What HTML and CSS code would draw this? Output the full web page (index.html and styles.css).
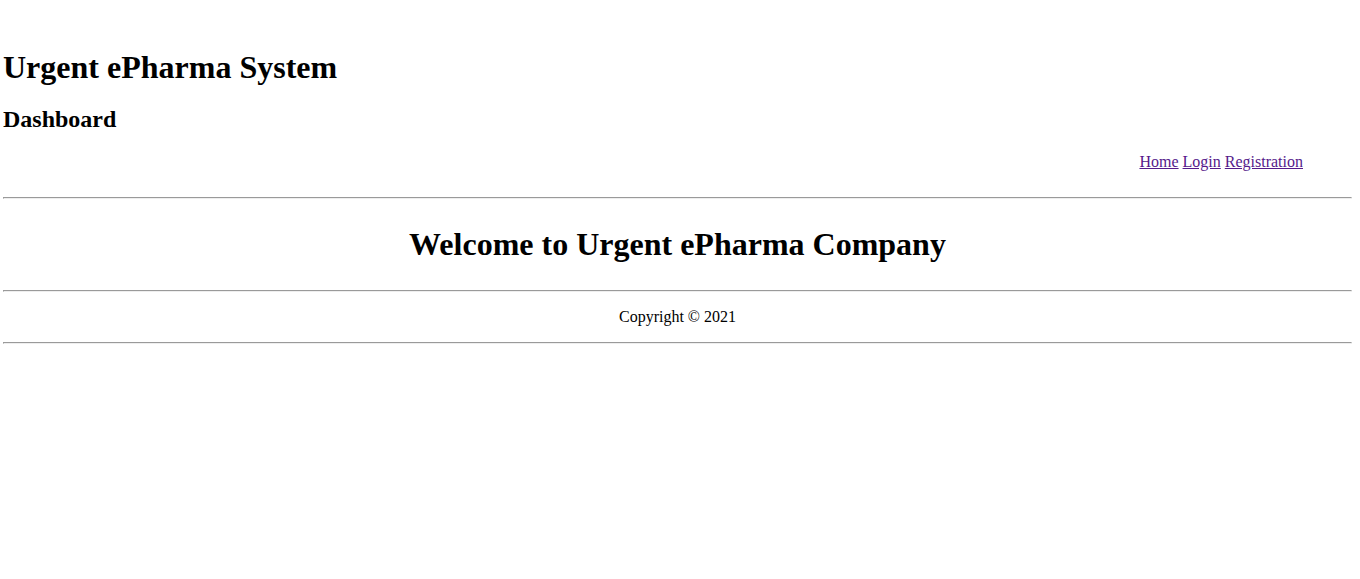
FILE: index.html
```html
<!DOCTYPE html>
<html lang="en">
<head>
    <meta charset="UTF-8">
    <meta name="viewport" content="width=device-width, initial-scale=1.0">
    <title>Urgent ePharma System</title>
    <link rel="stylesheet" href="styles.css">
</head>
<body>
    <div class="header">
        <h1>Urgent ePharma System</h1>
        <h2>Dashboard</h2>
        <div class="nav">
            <a href="#">Home</a>
            <a href="#">Login</a>
            <a href="#">Registration</a>
        </div>
    </div>
    <hr>
    <div class="content">
        <h1>Welcome to Urgent ePharma Company</h1>
    </div>
    <hr>
    <div class="footer">
        <p>Copyright &copy; 2021</p>
    </div>
    <hr>
</body>
</html>
```

FILE: styles.css
```css
body {
    font-family: "Liberation Serif", "Times New Roman", serif;
    margin: 0 8px 0 3px;
    padding-top: 28px;
}

.header h1 {
    margin: 21px 0 20px;
}

.nav {
    text-align: right;
    padding-right: 49px;
    margin-bottom: 26px;
}

.nav a {
    color: #551a8b;
}

hr {
    margin: 8px 0;
}

.content {
    text-align: center;
}

.content h1 {
    margin: 27px 0;
}

.footer {
    text-align: center;
}

.footer p {
    margin: 16px 0;
}
```
